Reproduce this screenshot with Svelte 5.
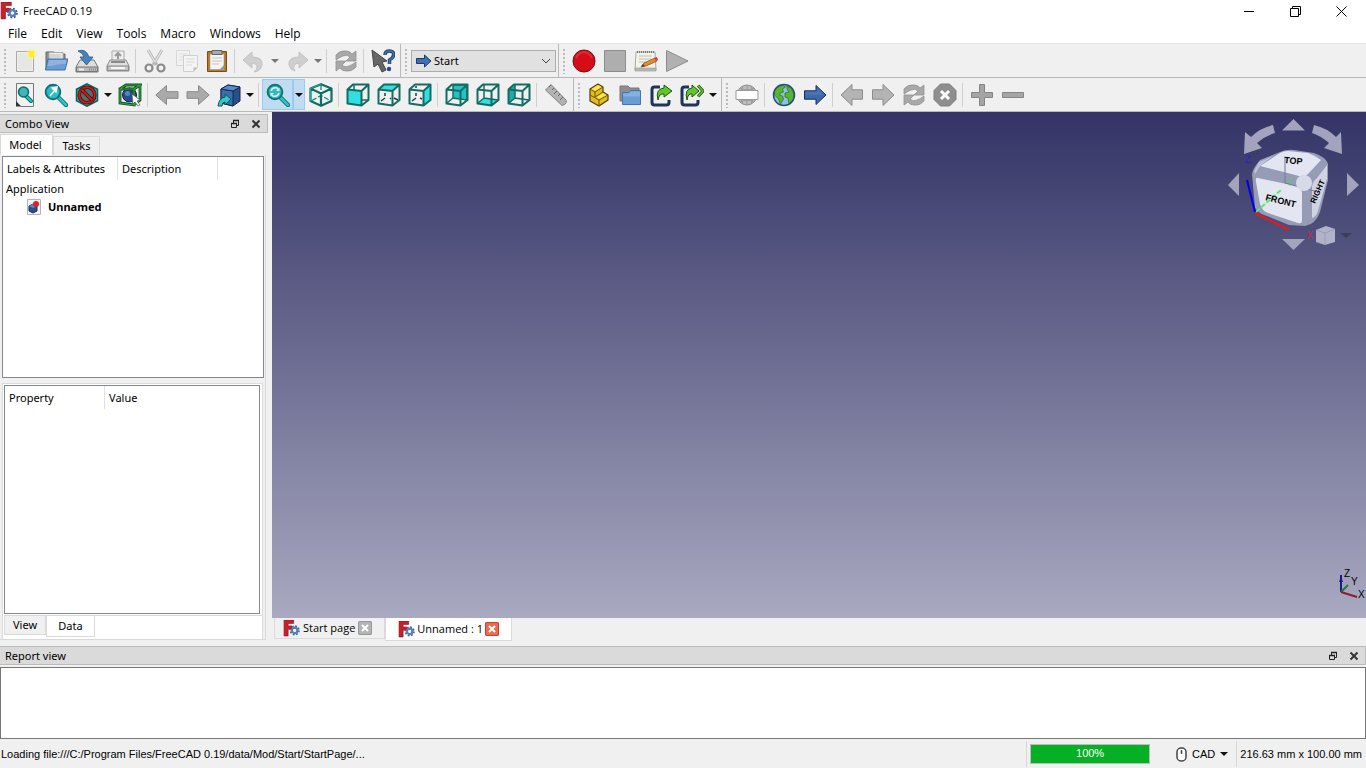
<script lang="ts">
  type Item = { icon?: string; label?: string; menu?: boolean; active?: boolean; off?: boolean; sep?: boolean };

  const sep: Item = { sep: true };

  const menus = ["File", "Edit", "View", "Tools", "Macro", "Windows", "Help"];

  const fileBar: Item[] = [
    { icon: "new", label: "New" },
    { icon: "open", label: "Open" },
    { icon: "save", label: "Save" },
    { icon: "print", label: "Print" },
    sep,
    { icon: "cut", label: "Cut", off: true },
    { icon: "copy", label: "Copy", off: true },
    { icon: "paste", label: "Paste" },
    sep,
    { icon: "undo", label: "Undo", menu: true, off: true },
    { icon: "redo", label: "Redo", menu: true, off: true },
    sep,
    { icon: "refresh", label: "Refresh", off: true },
    sep,
    { icon: "help", label: "What's this?" },
  ];

  const macroBar: Item[] = [
    { icon: "record", label: "Record macro" },
    { icon: "stop", label: "Stop recording", off: true },
    { icon: "macros", label: "Macros" },
    { icon: "play", label: "Execute macro", off: true },
  ];

  const viewBar: Item[] = [
    { icon: "fit-all", label: "Fit all" },
    { icon: "fit-selection", label: "Fit selection" },
    { icon: "draw-style", label: "Draw style", menu: true },
    { icon: "bounding-box", label: "Bounding box" },
    sep,
    { icon: "back", label: "Back", off: true },
    { icon: "forward", label: "Forward", off: true },
    { icon: "link", label: "Go to linked object", menu: true },
    sep,
    { icon: "sync", label: "Sync view", menu: true, active: true },
    { icon: "cube-iso", label: "Isometric" },
    sep,
    { icon: "cube-front", label: "Front" },
    { icon: "cube-top", label: "Top" },
    { icon: "cube-right", label: "Right" },
    sep,
    { icon: "cube-rear", label: "Rear" },
    { icon: "cube-bottom", label: "Bottom" },
    { icon: "cube-left", label: "Left" },
    sep,
    { icon: "ruler", label: "Measure distance", off: true },
  ];

  const structureBar: Item[] = [
    { icon: "part", label: "Create part" },
    { icon: "group", label: "Create group" },
    { icon: "make-link", label: "Make link" },
    { icon: "sub-link", label: "Link actions", menu: true },
  ];

  const webBar: Item[] = [
    { icon: "web", label: "Open website", off: true },
    sep,
    { icon: "globe", label: "Browser" },
    { icon: "start", label: "Start page" },
    sep,
    { icon: "prev", label: "Previous page", off: true },
    { icon: "next", label: "Next page", off: true },
    { icon: "refresh", label: "Refresh page", off: true },
    { icon: "cancel", label: "Stop loading", off: true },
    sep,
    { icon: "plus", label: "Zoom in", off: true },
    { icon: "minus", label: "Zoom out", off: true },
  ];

  let comboTab = $state("Model");
  let propTab = $state("Data");
  let docTab = $state("Unnamed : 1");
  let progress = $state(100);
</script>

{#snippet logo(size: number)}
  <svg width={size} height={size} viewBox="0 0 16 16" aria-hidden="true">
    <path d="M1 0h9v3.2H4.8v2.4h3.6v3H4.8V15H1z" fill="#c8202c" stroke="#8d0f18" stroke-width=".6" />
    <circle cx="11" cy="9.8" r="3.9" fill="none" stroke="#3c5f93" stroke-width="1.8" stroke-dasharray="1.6 1.46" />
    <circle cx="11" cy="9.8" r="2.5" fill="none" stroke="#5580b8" stroke-width="2.2" />
    <circle cx="11" cy="9.8" r="1.3" fill="#fff" />
  </svg>
{/snippet}

{#snippet cubeFrame()}
  <path d="M1.5 6.500l14 1.500v14.500l-14-2z M1.500 6.500L7 1.500h15.500L15.500 8 M22.500 1.500v15.500l-7 5.500" fill="none" stroke="#146c63" stroke-width="2" stroke-linejoin="round" />
{/snippet}

{#snippet icon(name: string)}
  <svg width="24" height="24" viewBox="0 0 24 24" aria-hidden="true">
    {#if name === "new"}
      <path d="M3.500 2.500h17v20h-17z" fill="#efefed" stroke="#a9aaa7" />
      <path d="M5 4h14v17H5z" fill="#e6e6e4" />
      <circle cx="18.500" cy="5" r="5.500" fill="#fff46a" opacity=".5" />
      <circle cx="18.500" cy="5" r="3" fill="#ffee1f" />
    {:else if name === "open"}
      <path d="M2 20V3h8l1 2h10v15z" fill="#8f8f8f" stroke="#666" />
      <path d="M5 3.500h14V14H5z" fill="#eee" stroke="#aaa" />
      <path d="M6 6h11M6 8h11" stroke="#bbb" />
      <path d="M4 10h20l-3 11H1.500z" fill="#6e9bd0" stroke="#3f6fa9" />
      <path d="M5 11h17.500l-1 4q-9 0-13 2H3.500z" fill="#8db3de" />
    {:else if name === "save"}
      <path d="M5 11h14l4 7v5H1v-5z" fill="#ddd" stroke="#777" />
      <path d="M1.500 18h21v4.500h-21z" fill="#b9b9b9" stroke="#777" />
      <path d="M4 20.500h5" stroke="#eee" stroke-width="2" />
      <path d="M14 20.500h7" stroke="#888" stroke-width="2" stroke-dasharray="1 1" />
      <path d="M3 2q8-3 11 6h4l-6.500 8L5 8h4q-1-4-6-6z" fill="#4a82b8" stroke="#23588d" stroke-width=".8" />
    {:else if name === "print"}
      <path d="M6 2h12v12H6z" fill="#eee" stroke="#aaa" />
      <path d="M12 4v6M9 7l3-3 3 3" fill="none" stroke="#999" stroke-width="2" />
      <path d="M4 11h16l3 6v5H1v-5z" fill="#ddd" stroke="#8a8a8a" />
      <path d="M5 13h14" stroke="#8b8b8b" stroke-width="2" />
      <path d="M1.500 17h21v4.500h-21z" fill="#c4c4c4" stroke="#8a8a8a" />
      <path d="M5 19h14" stroke="#f5f5f5" stroke-width="2" />
    {:else if name === "cut"}
      <path d="M5 1l9 15M19 1l-9 15" stroke="#b9b9b9" stroke-width="3" />
      <path d="M5 1l7 12M19 1l-7 12" stroke="#e4e4e4" stroke-width="1.200" />
      <circle cx="6" cy="19" r="3.500" fill="none" stroke="#8a8a8a" stroke-width="2.200" />
      <circle cx="18" cy="19" r="3.500" fill="none" stroke="#8a8a8a" stroke-width="2.200" />
    {:else if name === "copy"}
      <path d="M2.500 1.500h13v15h-13z" fill="#f2f2f2" stroke="#d8d8d8" />
      <path d="M5 5h8M5 8h8M5 11h8" stroke="#dedede" />
      <path d="M9.500 6.500h14v12l-4 4h-10z" fill="#f4f4f4" stroke="#cfcfcf" />
      <path d="M12 10h9M12 13h9M12 16h6" stroke="#dadada" />
      <path d="M23.500 18.500h-4v4z" fill="#bbb" />
    {:else if name === "paste"}
      <path d="M2.500 2.500h19v20h-19z" fill="#b4792c" stroke="#7a4c10" />
      <path d="M5 5h14v15.500H5z" fill="#f4f4f2" stroke="#999" stroke-width=".6" />
      <path d="M7 9h10M7 12h10M7 15h7" stroke="#c3c3c3" />
      <path d="M19 16v4.500h-4.500z" fill="#999" />
      <path d="M7 1.500h10v4H7z" fill="#aaa" stroke="#666" />
    {:else if name === "undo"}
      <path d="M10 3v5q11 0 10 8-1 6-8 7 4-3 3-6-1-3-5-3v5L1 11z" fill="#cfcfcf" stroke="#c2c2c2" />
    {:else if name === "redo"}
      <path d="M14 3v5Q3 8 4 16q1 5 6 6-2-3-1-5 1-3 5-3v5l9-8z" fill="#cfcfcf" stroke="#c2c2c2" />
    {:else if name === "refresh"}
      <path d="M2 11V6q4-5 10-4 4 0 6 3l4-3v10h-10l4-4q-3-3-7-1-3 1-7 4z" fill="#a8a8a8" stroke="#929292" stroke-width=".8" />
      <path d="M22 13v5q-4 5-10 4-4 0-6-3l-4 3V12h10l-4 4q3 3 7 1 3-1 7-4z" fill="#a8a8a8" stroke="#929292" stroke-width=".8" />
    {:else if name === "help"}
      <path d="M1 1l2 17 4-3 4 8 4-2-4-8 5-1z" fill="#666" stroke="#444" />
      <path d="M14 6q0-4 4.500-4t4 4q0 3-4 5v4" fill="none" stroke="#23436f" stroke-width="3.500" />
      <path d="M14 6q0-4 4.500-4t4 4q0 3-4 5v4" fill="none" stroke="#4472a8" stroke-width="1.500" />
      <circle cx="18" cy="20" r="2.200" fill="#2a4a78" />
    {:else if name === "record"}
      <circle cx="12" cy="12" r="11" fill="#d40d17" stroke="#6f1014" />
      <path d="M4 9q3-6 8-6t8 6" fill="none" stroke="#dd2f37" stroke-width="2" />
    {:else if name === "stop"}
      <path d="M1.500 1.500h21v21h-21z" fill="#aeaeae" stroke="#8c8c8c" />
    {:else if name === "macros"}
      <path d="M2 3h19l1 18H1z" fill="#f3f3ec" stroke="#aaa" />
      <path d="M3 3h18" stroke="#777" stroke-width="2" stroke-dasharray="1 1" />
      <path d="M5 7h13M5 10h12M5 13h7" stroke="#bbc2a8" />
      <path d="M1 19h21v3H1z" fill="#b7b7b3" stroke="#999" stroke-width=".6" />
      <path d="M7 18l3-4 11-5 2 3-11 5z" fill="#e58c2b" stroke="#8d5518" stroke-width=".8" />
      <path d="M20 9l3-1 1 3-2 1z" fill="#d64040" />
      <path d="M7 18l2-3 2 2z" fill="#444" />
    {:else if name === "play"}
      <path d="M1.500 1.500v21L23 12z" fill="#b1b1b1" stroke="#8c8c8c" />
    {:else if name === "fit-all"}
      <path d="M3.500.5h17v23H8l-4.500-4z" fill="#f1f1ef" stroke="#777" />
      <path d="M3 18l5 5.500H3z" fill="#333" />
      <path d="M13 13l5 5" stroke="#0e6b70" stroke-width="4" stroke-linecap="round" />
      <path d="M13 13l5 5" stroke="#2bc5c7" stroke-width="2" stroke-linecap="round" />
      <circle cx="10.500" cy="9" r="5" fill="#3fb5b6" stroke="#0e6b70" stroke-width="1.500" />
    {:else if name === "fit-selection"}
      <path d="M14 14l8 8" stroke="#0e6b70" stroke-width="4.500" stroke-linecap="round" />
      <path d="M14 14l8 8" stroke="#2bc5c7" stroke-width="2.500" stroke-linecap="round" />
      <circle cx="9" cy="9" r="7.300" fill="#2fbcc0" stroke="#0f7378" stroke-width="2" />
      <path d="M6 13l6-7M8 5l5-1-1 5z" fill="#fff" stroke="#fff" stroke-width="1.500" />
    {:else if name === "draw-style"}
      <path d="M12 .800l10.500 5.500v11.500L12 23.200 1.500 17.800V6.300z" fill="#27b7b4" stroke="#0c605e" stroke-width="1.500" />
      <circle cx="12" cy="12" r="7.800" fill="#4a7371" stroke="#4f0b0b" stroke-width="3.600" />
      <circle cx="12" cy="12" r="7.800" fill="none" stroke="#c21f1f" stroke-width="2" />
      <path d="M6.500 6.500l11 11" stroke="#4f0b0b" stroke-width="3.800" />
      <path d="M6.500 6.500l11 11" stroke="#c21f1f" stroke-width="2.200" />
    {:else if name === "bounding-box"}
      <circle cx="11.500" cy="12" r="7" fill="#2a4d92" stroke="#0b1c45" />
      <circle cx="9.500" cy="10.500" r="2.500" fill="#5b82c4" />
      <path d="M2 6h14v16L2 20zM2 6l6-4 14 0-6 4M22 2v15l-6 5" fill="none" stroke="#0d4f19" stroke-width="2.800" />
      <path d="M2 6h14v16L2 20zM2 6l6-4 14 0-6 4M22 2v15l-6 5" fill="none" stroke="#33a043" stroke-width="1.200" />
      <path d="M14 11l1 10 2-2 3 4 2-1-3-4 3-1z" fill="#fff" stroke="#555" stroke-width=".7" />
    {:else if name === "back"}
      <path d="M.800 12L11.500 2.500v6.200H23v6.600H11.500v6.200z" fill="#aaa" stroke="#888" />
    {:else if name === "forward"}
      <path d="M23.200 12L12.500 2.500v6.200H1v6.600h11.500v6.200z" fill="#aaa" stroke="#888" />
    {:else if name === "link"}
      <path d="M4 6l7-4 12 2v14l-7 5-12-3z" fill="#284f88" stroke="#112b52" />
      <path d="M4 6l12 2v15L4 20z" fill="#3a6fae" stroke="#112b52" />
      <path d="M4 6l7-4 12 2-7 4z" fill="#5c8cc5" stroke="#112b52" />
      <path d="M8 11v3q-6 1-7 9h4q0-4 3-4v3l6-6z" fill="#36c5c5" stroke="#0b5658" />
    {:else if name === "sync"}
      <path d="M14 14l8 8" stroke="#0e6b70" stroke-width="4.500" stroke-linecap="round" />
      <path d="M14 14l8 8" stroke="#2bc5c7" stroke-width="2.500" stroke-linecap="round" />
      <circle cx="9" cy="9" r="7.300" fill="#35b9bd" stroke="#0f7378" stroke-width="2" />
      <path d="M5 8q1-4 6-3l1 1M13 10q-1 4-6 3l-1-1" fill="none" stroke="#d9f5f4" stroke-width="1.500" />
      <path d="M10 8h3.500V4.500zM8 10H4.500v3.500z" fill="#d9f5f4" />
    {:else if name === "cube-iso"}
      <path d="M12 1.200L22.500 5.500v12.500L12 22.800 1.500 18V5.500z" fill="#e8f4f4" />
      <path d="M12 2v10M3 17.500l9-5 9 5" fill="none" stroke="#1f8279" stroke-width="1.300" stroke-dasharray="5 2" />
      <path d="M12 1.200L22.500 5.500v12.500L12 22.800 1.500 18V5.500zM1.500 5.500L12 10.500l10.500-5M12 10.500v12" fill="none" stroke="#146c63" stroke-width="2.200" stroke-linejoin="round" />
      <path d="M12 1.200L1.500 5.500V18" fill="none" stroke="#2ecbc4" stroke-width=".6" />
    {:else if name === "cube-front"}
      <path d="M8 2v5M22 17h-6" stroke="#146c63" stroke-width="1.500" />
      <path d="M1.500 6.500l14 1.500v14.500l-14-2z" fill="#31dfe2" />
      {@render cubeFrame()}
    {:else if name === "cube-top"}
      <path d="M1.500 6.500L7 1.500h15.500L15.500 8z" fill="#31dfe2" />
      <path d="M8 10v3M4 18l4-3M13 15l1 1M17 15l4 2" stroke="#193f40" stroke-width="1.500" />
      {@render cubeFrame()}
    {:else if name === "cube-right"}
      <path d="M8 3v2M8 10v3M4 18l4-3M12 15l2 1" stroke="#193f40" stroke-width="1.500" />
      <path d="M15.500 8l7-6.500V17l-7 5.500z" fill="#31dfe2" />
      {@render cubeFrame()}
    {:else if name === "cube-rear"}
      <path d="M8 2h14v15L8 15z" fill="#22c3c8" stroke="#146c63" stroke-width="1.500" />
      <path d="M2 20l6-5" stroke="#146c63" stroke-width="1.500" />
      {@render cubeFrame()}
    {:else if name === "cube-bottom"}
      <path d="M2 20.500l6-5.500 14 2-6.500 5.500z" fill="#31dfe2" />
      <path d="M8 2v13l14 2M2 20l6-5" fill="none" stroke="#146c63" stroke-width="1.500" />
      {@render cubeFrame()}
    {:else if name === "cube-left"}
      <path d="M2 6.500L8 2v13l-6 5.500z" fill="#1fa9ad" />
      <path d="M8 2v13l14 2M2 20l6-5" fill="none" stroke="#146c63" stroke-width="1.500" />
      {@render cubeFrame()}
    {:else if name === "ruler"}
      <path d="M7 1.500L22.500 17.500q0 4-4.500 5L1.500 7z" fill="#b2b2b2" stroke="#858585" />
      <path d="M7 2l-2 2M10 5L8 7M13 8l-3 3M16 11l-2 2M19 14l-3 3" stroke="#666" />
    {:else if name === "part"}
      <path d="M3 11V6l8-5 5 3v5l5 3v5l-9 6-9-5z" fill="#e3bd1c" stroke="#4d3e00" stroke-width="1.200" stroke-linejoin="round" />
      <path d="M3 6l5 3 8-5M8 9v5M3 12l9 5 9-5M12 17v6M8 14l8-5" fill="none" stroke="#6d5900" />
      <path d="M4.500 6l6.500-4 3.500 2L8 8zM10 14l6-4 3.500 2-7.500 4z" fill="#f9e45a" />
    {:else if name === "group"}
      <path d="M2 18V3h8l2 2h9v13z" fill="#8e8e8e" stroke="#777" />
      <path d="M4.500 9.500h6l2-2h10v14h-18z" fill="#699cd4" stroke="#4476ae" />
      <path d="M5 10.500h6l2-2h9v5H5z" fill="#86b0df" />
    {:else if name === "make-link"}
      <path d="M11 4H5.500Q3 4 3 6.500v13Q3 22 5.500 22h12q2.500 0 2.500-2.500V17" fill="none" stroke="#1d3557" stroke-width="3" />
      <path d="M15 2l8 6-8 6v-3q-5-1-6 6Q6 6 15 5z" fill="#61c62d" stroke="#1e5410" />
    {:else if name === "sub-link"}
      <path d="M9 4H4.500Q2 4 2 6.500v13Q2 22 4.500 22h11q2.500 0 2.500-2.500V17" fill="none" stroke="#1d3557" stroke-width="3" />
      <path d="M12 2l7 6-7 6v-3q-4-1-5 6Q4 6 12 5z" fill="#61c62d" stroke="#1e5410" />
      <path d="M18 2.500l5 5.500-5 5.500" fill="none" stroke="#1e5410" stroke-width="3" />
      <path d="M18 2.500l5 5.500-5 5.500" fill="none" stroke="#61c62d" stroke-width="1.500" />
    {:else if name === "web"}
      <circle cx="12" cy="12" r="10" fill="#bdbdbd" stroke="#8f8f8f" />
      <path d="M12 2v20M5 5q7 4 14 0M5 19q7-4 14 0M8 3q-4 9 0 18M16 3q4 9 0 18" fill="none" stroke="#999" />
      <path d="M1 7.500h22v9H1z" fill="#fff" stroke="#999" />
    {:else if name === "globe"}
      <circle cx="12" cy="12" r="10.500" fill="#8fc0dd" />
      <path d="M2.500 8q2-5 8-6l3 2-3 2 1 3-3 1-1 2 3 1 1 3-3 5-2-5-4-4z" fill="#57b52e" stroke="#256b22" stroke-width=".7" />
      <path d="M15 3l4 2 3 6-1 6-4 4-1-6-3-1 0-4 4-1-2-3z" fill="#57b52e" stroke="#256b22" stroke-width=".7" />
      <circle cx="12" cy="12" r="10.500" fill="none" stroke="#24507c" stroke-width="1.500" />
    {:else if name === "start"}
      <path d="M23 12L13 2.500v5.300H1.500v8.400H13v5.300z" fill="#3d69ab" stroke="#172f57" />
      <path d="M2.500 8.800h11.500V5l7 7H2.500z" fill="#4874b4" />
    {:else if name === "prev"}
      <path d="M1 12L12 1.500v5.300h10.500v9.400H12v6.300z" fill="#b4b4b4" stroke="#8c8c8c" />
    {:else if name === "next"}
      <path d="M23 12L12 1.500v5.300H1.500v9.400H12v6.300z" fill="#b4b4b4" stroke="#8c8c8c" />
    {:else if name === "cancel"}
      <path d="M7.500 1h9L23 7.500v9L16.500 23h-9L1 16.500v-9z" fill="#8e8e8e" stroke="#7f7f7f" />
      <path d="M8 8l8 8M16 8l-8 8" stroke="#fff" stroke-width="3" />
    {:else if name === "plus"}
      <path d="M9.500 1.500h5v8h8v5h-8v8h-5v-8h-8v-5h8z" fill="#a5a5a5" stroke="#858585" />
    {:else if name === "minus"}
      <path d="M1.500 9.500h21v5h-21z" fill="#a5a5a5" stroke="#858585" />
    {/if}
  </svg>
{/snippet}

{#snippet toolbar(items: Item[], label: string)}
  <div class="toolbar" role="toolbar" aria-label={label}>
    <span class="handle"></span>
    {#each items as item}
      {#if item.sep}
        <span class="sep"></span>
      {:else}
        <button class="tool" class:active={item.active} disabled={item.off} aria-label={item.label}>
          {@render icon(item.icon ?? "")}
        </button>
        {#if item.menu}
          <button class="drop" class:active={item.active} disabled={item.off} aria-label="{item.label} menu">
            <span class="caret"></span>
          </button>
        {/if}
      {/if}
    {/each}
  </div>
{/snippet}

{#snippet dockTitle(title: string)}
  <header class="dock-title">
    <h2>{title}</h2>
    <button aria-label="Float {title}">
      <svg width="10" height="10" viewBox="0 0 10 10">
        <path d="M3.500 4V1.500h5v5H7M1.500 4.500h5v4h-5z" fill="none" stroke="#222" />
        <path d="M3 1.500h6M1 4.500h6" stroke="#222" stroke-width="1.500" />
      </svg>
    </button>
    <button aria-label="Close {title}">
      <svg width="10" height="10" viewBox="0 0 10 10">
        <path d="M1.500 1.500l7 7M8.500 1.500l-7 7" stroke="#333" stroke-width="2" />
      </svg>
    </button>
  </header>
{/snippet}

<div class="window">
  <header class="titlebar">
    {@render logo(18)}
    <h1>FreeCAD 0.19</h1>
    <button aria-label="Minimize">
      <svg width="11" height="11" viewBox="0 0 11 11"><path d="M0 5.500h10" stroke="#000" /></svg>
    </button>
    <button aria-label="Restore">
      <svg width="11" height="11" viewBox="0 0 11 11">
        <path d="M.500 2.500h8v8h-8zM2.500 2.500v-2h8v8h-2" fill="none" stroke="#000" />
      </svg>
    </button>
    <button aria-label="Close">
      <svg width="11" height="11" viewBox="0 0 11 11"><path d="M.500.500l10 10M10.500.500l-10 10" stroke="#000" /></svg>
    </button>
  </header>

  <nav class="menubar">
    {#each menus as menu}
      <button>{menu}</button>
    {/each}
  </nav>

  <div class="toolrow">
    {@render toolbar(fileBar, "File")}
    <div class="toolbar" role="toolbar" aria-label="Workbench">
      <span class="handle"></span>
      <div class="workbench">
        <svg width="16" height="16" viewBox="0 0 16 16" aria-hidden="true">
          <path d="M15 8L8.500 2v3.500h-8v5h8V14z" fill="#4070b4" stroke="#1c3a68" />
        </svg>
        <select aria-label="Workbench">
          <option>Start</option>
          <option>Part</option>
          <option>Part Design</option>
        </select>
        <svg width="10" height="6" viewBox="0 0 10 6" aria-hidden="true">
          <path d="M1 1l4 4 4-4" fill="none" stroke="#444" />
        </svg>
      </div>
    </div>
    {@render toolbar(macroBar, "Macro")}
  </div>
  <div class="toolrow">
    {@render toolbar(viewBar, "View")}
    {@render toolbar(structureBar, "Structure")}
    {@render toolbar(webBar, "Web")}
  </div>

  <main>
    <aside>
      {@render dockTitle("Combo View")}
      <div class="tabs">
        {#each ["Model", "Tasks"] as tab}
          <button class:current={tab === comboTab} onclick={() => (comboTab = tab)}>{tab}</button>
        {/each}
      </div>
      <div class="pane">
        <div class="tree">
          <table>
            <thead>
              <tr><th class="labels">Labels &amp; Attributes</th><th class="desc">Description</th><th></th></tr>
            </thead>
            <tbody>
              <tr><td colspan="3">Application</td></tr>
              <tr>
                <td colspan="3">
                  <span class="doc">
                    <svg width="14" height="16" viewBox="0 0 14 16" aria-hidden="true">
                      <path d="M.500.500h13v15H.500z" fill="#f4f4f4" stroke="#b5b5b5" />
                      <path d="M2 7l4-2 4 2v5l-4 2-4-2z" fill="#2c5289" stroke="#173259" />
                      <path d="M2 7l4 2 4-2-4-2z" fill="#6288ba" />
                      <circle cx="9" cy="5" r="3" fill="#d62233" />
                    </svg>
                    Unnamed
                  </span>
                </td>
              </tr>
            </tbody>
          </table>
        </div>
        <div class="props">
          <div class="prop-box">
            <table>
              <thead>
                <tr><th class="prop">Property</th><th>Value</th></tr>
              </thead>
            </table>
          </div>
          <div class="bottom-tabs">
            {#each ["View", "Data"] as tab}
              <button class:current={tab === propTab} onclick={() => (propTab = tab)}>{tab}</button>
            {/each}
          </div>
        </div>
      </div>
    </aside>

    <section class="mdi">
      <div class="viewport">
        <svg class="navcube" width="138" height="140" viewBox="0 0 138 140" aria-label="Navigation cube">
          <g fill="#a3a3bd">
            <path d="M65.500 7L77 18.500H54zM65.500 138L54 127h23zM0 73l11-12v23zM131 73l-12-12v23z" />
            <path d="M45 13q-13 3-22 12l-6-5-1 22 18-6-5-5q8-7 18-10z" />
            <path d="M86 13q13 3 22 12l5-5 1 22-18-6 5-5q-8-7-17-10z" />
          </g>
          <text x="17" y="51" fill="#2525c8">Z</text>
          <path d="M27 96L24 62q1-6 8-14l20-8q7-3 14-2l20 3q12 4 14 11v16l-8 32q-4 12-15 14l-16-1-22-9q-9-3-12-8z" fill="#969bb6" />
          <path d="M32 54l20-13q3-2 8-2l20 2q6 2 13 7L80 62q-3 3-9 2z" fill="#e3e5f0" />
          <path d="M30 66l38 8q6 1 6 7v28q0 3-4 2l-30-10q-6-2-8-9l-4-22q-1-5 2-4z" fill="#e3e5f0" />
          <path d="M99 53l0 14-9 32q-2 6-6 7V76q0-6 5-10z" fill="#d0d3e2" />
          <path d="M26 59l5-9 14-6-13 10-5 8z" fill="#bdc2d8" />
          <path d="M57 45v26l33 9" fill="none" stroke="#73789a" />
          <path d="M28 100l26-23" stroke="#58e878" stroke-width="2" stroke-dasharray="5 2" />
          <circle cx="76" cy="71" r="8" fill="#d8daea" />
          <text class="face" x="56" y="51" transform="rotate(5 56 51)">TOP</text>
          <text class="face" x="37" y="88" transform="rotate(14 37 88)">FRONT</text>
          <text class="face side" x="87" y="92" transform="rotate(-66 87 92)">RIGHT</text>
          <text x="59" y="74" fill="#59ca72">Y</text>
          <path d="M27 100L19 68" stroke="#0000e8" stroke-width="2" />
          <path d="M27 101l34 17" stroke="#ee1717" stroke-width="2" />
          <text x="79" y="127" fill="#c42a4a">X</text>
          <path d="M88 118l10-4 9 3v13l-10 3-9-3z" fill="#b2b3c8" />
          <path d="M88 118l9 3v12M97 121l10-4" fill="none" stroke="#9c9db6" />
          <path d="M112 121h12l-6 5z" fill="#3e3d5b" />
        </svg>
        <svg class="axes" width="32" height="40" viewBox="0 0 32 40" aria-label="Axis cross">
          <path d="M7 30V13" stroke="#1b1b8c" stroke-width="2" />
          <path d="M5 20l2-6 2 6z" fill="#1b1b8c" />
          <path d="M7 30l7-7" stroke="#207a38" stroke-width="2" />
          <path d="M7 30l16 5" stroke="#8c1c2c" stroke-width="2" />
          <text x="10" y="15">Z</text>
          <text x="17" y="23">Y</text>
          <text x="24" y="36">X</text>
        </svg>
      </div>
      <div class="doc-tabs">
        {#each ["Start page", "Unnamed : 1"] as tab}
          <div class="doc-tab" class:current={tab === docTab}>
            {@render logo(17)}
            <button class="doc-name" onclick={() => (docTab = tab)}>{tab}</button>
            <button class="doc-close" aria-label="Close {tab}">
              <svg width="14" height="14" viewBox="0 0 14 14">
                <path d="M4 4l6 6M10 4l-6 6" stroke="#fff" stroke-width="2" />
              </svg>
            </button>
          </div>
        {/each}
      </div>
    </section>
  </main>

  <section class="report">
    {@render dockTitle("Report view")}
    <div class="report-box"></div>
  </section>

  <footer>
    <span class="message">Loading file:///C:/Program Files/FreeCAD 0.19/data/Mod/Start/StartPage/...</span>
    <div class="progress-cell">
      <div class="progress" role="progressbar" aria-valuenow={progress}>
        <div class="bar" style="width: {progress}%"></div>
        <span>{progress}%</span>
      </div>
    </div>
    <button class="nav-style">
      <svg width="11" height="15" viewBox="0 0 11 15" aria-hidden="true">
        <rect x="1" y="1" width="9" height="13" rx="4" fill="#fff" stroke="#444" stroke-width="1.500" />
        <path d="M5.500 3v4" stroke="#444" stroke-width="1.500" />
      </svg>
      CAD
      <span class="caret"></span>
    </button>
    <span class="size">216.63 mm x 100.00 mm</span>
  </footer>
</div>

<style>
  :global(body) {
    margin: 0;
  }

  .window {
    min-height: 100vh;
    display: flex;
    flex-direction: column;
    background: #f0f0f0;
    color: #000;
    font: 11px/16px "Open Sans", "Noto Sans", sans-serif;
  }

  button,
  select {
    margin: 0;
    padding: 0;
    border: 0;
    background: transparent;
    color: inherit;
    font: inherit;
  }

  h1,
  h2 {
    margin: 0;
    flex: 1;
    font: inherit;
  }

  svg {
    display: block;
    flex-shrink: 0;
  }

  .titlebar {
    height: 22px;
    display: flex;
    align-items: center;
    padding-right: 2px;
    background: #fff;
  }

  .titlebar h1 {
    padding-left: 5px;
  }

  .titlebar button {
    width: 46px;
    height: 20px;
    display: grid;
    place-items: center;
  }

  .menubar {
    height: 19px;
    display: flex;
    padding: 2px 0 0 1px;
    border-bottom: 1px solid #e4e4e4;
    background: #fff;
    font-size: 12px;
  }

  .menubar button {
    padding: 0 7px;
  }

  .toolrow {
    height: 33px;
    display: flex;
    border-bottom: 1px solid #b8b8b8;
  }

  .toolbar {
    display: flex;
    align-items: center;
    padding-right: 2px;
    border-right: 1px solid #b8b8b8;
  }

  .toolbar:last-child {
    border-right: 0;
  }

  .handle {
    width: 9px;
    height: 26px;
    background: radial-gradient(circle at 5px 2px, #bbb 1px, transparent 1px) 0 0 / 9px 4px;
  }

  .sep {
    width: 1px;
    height: 24px;
    margin: 0 3px 0 2px;
    background: #cfcfcf;
  }

  .tool,
  .drop {
    width: 31px;
    height: 31px;
    display: grid;
    place-items: center;
  }

  .drop {
    width: 12px;
  }

  .tool.active,
  .drop.active {
    background: #c0dcf3;
    box-shadow: inset 0 0 0 1px #9cc9ee;
  }

  .caret {
    border: 4px solid transparent;
    border-top-color: #111;
    border-bottom-width: 0;
  }

  .drop:disabled .caret {
    border-top-color: #777;
  }

  .workbench {
    width: 145px;
    height: 22px;
    box-sizing: border-box;
    display: flex;
    align-items: center;
    margin-left: 1px;
    padding: 0 4px;
    gap: 2px;
    border: 1px solid #adadad;
    background: #e1e1e1;
    font-family: "Noto Sans", sans-serif;
  }

  .workbench select {
    flex: 1;
    appearance: none;
  }

  main {
    flex: 1;
    display: grid;
    grid-template-columns: 272px 1fr;
  }

  aside {
    display: flex;
    flex-direction: column;
    padding: 2px 4px 0 0;
    font-family: "Noto Sans", sans-serif;
  }

  .dock-title {
    height: 17px;
    display: flex;
    align-items: center;
    padding: 0 5px;
    border: 1px solid #bcbcbc;
    border-left: 0;
    background: #dadada;
    font-family: "Noto Sans", sans-serif;
  }

  .dock-title button {
    width: 11px;
    margin-left: 10px;
  }

  .tabs {
    display: flex;
    align-items: flex-end;
    height: 22px;
  }

  .tabs button {
    width: 47px;
    height: 19px;
    border: 1px solid #d9d9d9;
    border-bottom: 0;
  }

  .tabs .current {
    width: 53px;
    height: 21px;
    padding: 0 2px 0 0;
    background: #fff;
  }

  .pane {
    flex: 1;
    display: flex;
    flex-direction: column;
    gap: 5px;
    padding: 1px 1px 0 2px;
    margin: 0 2px 6px 0;
    border-right: 1px solid #d9d9d9;
    border-bottom: 1px solid #d9d9d9;
  }

  .tree {
    flex: 1 1 220px;
    border: 1px solid #828790;
    background: #fff;
  }

  table {
    width: 100%;
    border-collapse: collapse;
    table-layout: fixed;
  }

  th,
  td {
    padding: 0 3px;
    text-align: left;
    font-weight: normal;
  }

  th {
    height: 23px;
    padding: 0 4px;
    border-right: 1px solid #e0e0e0;
    white-space: nowrap;
  }

  th:last-child {
    border-right: 0;
  }

  td {
    height: 18px;
  }

  .labels {
    width: 106px;
  }

  .desc {
    width: 91px;
  }

  .doc {
    display: flex;
    align-items: center;
    gap: 7px;
    padding-left: 21px;
    font-weight: bold;
  }

  .props {
    flex: 1 1 255px;
    display: flex;
    flex-direction: column;
    margin-right: 1px;
    border: 1px solid #dcdcdc;
    border-bottom: 0;
    background: #fff;
  }

  .prop-box {
    flex: 1;
    margin: 1px 2px 1px 1px;
    border: 1px solid #828790;
  }

  .prop {
    width: 91px;
  }

  .bottom-tabs {
    display: flex;
    height: 23px;
    align-items: flex-start;
    margin-left: 1px;
    border-top: 1px solid #d9d9d9;
  }

  .bottom-tabs button {
    width: 42px;
    height: 19px;
    border: 1px solid #d9d9d9;
    border-top: 0;
    background: #f0f0f0;
  }

  .bottom-tabs .current {
    width: 49px;
    height: 21px;
    background: #fff;
  }

  .mdi {
    display: flex;
    flex-direction: column;
  }

  .viewport {
    position: relative;
    flex: 1;
    background: linear-gradient(#333366, #a9a9c1);
  }

  .navcube {
    position: absolute;
    top: 0;
    right: 0;
    font-size: 10px;
  }

  .face {
    fill: #000;
    font: bold 9px "Liberation Sans", sans-serif;
  }

  .side {
    font-size: 8px;
  }

  .axes {
    position: absolute;
    right: 0;
    bottom: 16px;
    font: 10px "Liberation Sans", sans-serif;
  }

  .doc-tabs {
    height: 28px;
    display: flex;
    align-items: flex-start;
    padding-left: 2px;
  }

  .doc-tab {
    height: 20px;
    display: flex;
    align-items: center;
    gap: 3px;
    padding: 0 12px 0 8px;
    border: 1px solid #dadada;
    border-top: 0;
  }

  .doc-tab.current {
    height: 22px;
    padding: 0 12px;
    gap: 2px;
    background: #fff;
  }

  .doc-close {
    border-radius: 2px;
    background: #b4b4b4;
    box-shadow: inset 0 0 0 1px #989898;
  }

  .doc-tab.current .doc-close {
    background: #ed6a50;
    box-shadow: inset 0 0 0 1px #c8402c;
  }

  .report-box {
    height: 70px;
    margin-top: 2px;
    border: 1px solid #777;
    background: #fff;
  }

  footer {
    height: 28px;
    display: flex;
    align-items: center;
    padding-top: 1px;
    font-family: "Liberation Sans", sans-serif;
  }

  .message {
    flex: 1;
    padding-left: 1px;
  }

  .progress-cell {
    padding: 3px 26px 3px 3px;
    border-left: 1px solid #d7d7d7;
  }

  .progress {
    display: grid;
    width: 118px;
    height: 18px;
    border: 1px solid #bcbcbc;
    background: #e6e6e6;
    color: #fff;
    text-align: center;
  }

  .progress > * {
    grid-area: 1 / 1;
  }

  .bar {
    background: #06b025;
  }

  .nav-style {
    display: flex;
    align-items: center;
    gap: 5px;
    padding-right: 8px;
  }

  .size {
    padding: 5px 4px 5px 3px;
    border-left: 1px solid #d7d7d7;
  }
</style>
